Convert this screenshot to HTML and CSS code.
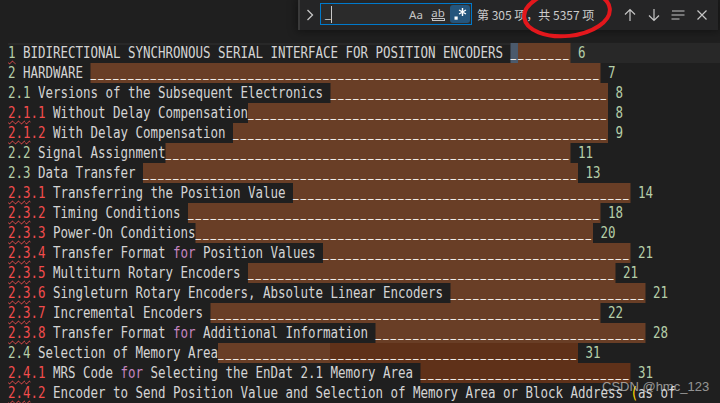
FILE: index.html
```html
<!DOCTYPE html>
<html lang="zh-CN">
<head>
<meta charset="utf-8">
<title>Find</title>
<link rel="stylesheet" href="styles.css">
</head>
<body>
<div class="editor">
  <div class="lines">
    <div class="row cl"><span class="t"><span class="g"><span class="sq">1</span></span> BIDIRECTIONAL SYNCHRONOUS SERIAL INTERFACE FOR POSITION ENCODERS </span><span class="f cb"><span class="u">_</span></span><span class="f"><span class="u">_______</span></span><span class="p"> 6</span></div>
    <div class="row"><span class="t"><span class="g">2</span> HARDWARE </span><span class="f"><span class="u">____________________________________________________________________</span></span><span class="p"> 7</span></div>
    <div class="row"><span class="t"><span class="g">2.1</span> Versions of the Subsequent Electronics </span><span class="f"><span class="u">_____________________________________</span></span><span class="p"> 8</span></div>
    <div class="row"><span class="t"><span class="r"><span class="sq">2.1</span>.1</span> Without Delay Compensation</span><span class="f"><span class="u">________________________________________________</span></span><span class="p"> 8</span></div>
    <div class="row"><span class="t"><span class="r"><span class="sq">2.1</span>.2</span> With Delay Compensation </span><span class="f"><span class="u">__________________________________________________</span></span><span class="p"> 9</span></div>
    <div class="row"><span class="t"><span class="g">2.2</span> Signal Assignment</span><span class="f"><span class="u">______________________________________________________</span></span><span class="p"> 11</span></div>
    <div class="row"><span class="t"><span class="g">2.3</span> Data Transfer </span><span class="f"><span class="u">__________________________________________________________</span></span><span class="p"> 13</span></div>
    <div class="row"><span class="t"><span class="r"><span class="sq">2.3</span>.1</span> Transferring the Position Value </span><span class="f"><span class="u">_____________________________________________</span></span><span class="p"> 14</span></div>
    <div class="row"><span class="t"><span class="r"><span class="sq">2.3</span>.2</span> Timing Conditions </span><span class="f"><span class="u">_______________________________________________________</span></span><span class="p"> 18</span></div>
    <div class="row"><span class="t"><span class="r"><span class="sq">2.3</span>.3</span> Power-On Conditions</span><span class="f"><span class="u">_____________________________________________________</span></span><span class="p"> 20</span></div>
    <div class="row"><span class="t"><span class="r"><span class="sq">2.3</span>.4</span> Transfer Format <span class="k">for</span> Position Values </span><span class="f"><span class="u">_________________________________________</span></span><span class="p"> 21</span></div>
    <div class="row"><span class="t"><span class="r"><span class="sq">2.3</span>.5</span> Multiturn Rotary Encoders </span><span class="f"><span class="u">_________________________________________________</span></span><span class="p"> 21</span></div>
    <div class="row"><span class="t"><span class="r"><span class="sq">2.3</span>.6</span> Singleturn Rotary Encoders, Absolute Linear Encoders </span><span class="f"><span class="u">__________________________</span></span><span class="p"> 21</span></div>
    <div class="row"><span class="t"><span class="r"><span class="sq">2.3</span>.7</span> Incremental Encoders </span><span class="f"><span class="u">____________________________________________________</span></span><span class="p"> 22</span></div>
    <div class="row"><span class="t"><span class="r"><span class="sq">2.3</span>.8</span> Transfer Format <span class="k">for</span> Additional Information </span><span class="f"><span class="u">____________________________________</span></span><span class="p"> 28</span></div>
    <div class="row"><span class="t"><span class="g">2.4</span> Selection of Memory Area</span><span class="f split"><span class="u">________________________________________________</span></span><span class="p"> 31</span></div>
    <div class="row"><span class="t"><span class="r"><span class="sq">2.4</span>.1</span> MRS Code <span class="k">for</span> Selecting the EnDat 2.1 Memory Area </span><span class="f dk"><span class="u">____________________________</span></span><span class="p"> 31</span></div>
    <div class="row"><span class="t"><span class="r"><span class="sq">2.4</span>.2</span> Encoder to Send Position Value and Selection of Memory Area or Block Address <span class="y">(</span>as of</span></div>
  </div>

  <div class="find">
    <div class="toggle">
      <svg width="16" height="16" viewBox="0 0 16 16"><path d="M5.5 3 L10.5 8 L5.5 13" fill="none" stroke="#c5c5c5" stroke-width="1.3"/></svg>
    </div>
    <div class="input">
      <span class="q">_</span><span class="caret"></span>
      <span class="spacer"></span>
      <span class="opt">Aa</span>
      <span class="opt ww"><span class="ab">ab</span><span class="brk"></span></span>
      <span class="opt on">
        <svg width="16" height="16" viewBox="0 0 16 16"><rect x="2.5" y="10.5" width="3.2" height="3.2" fill="#ffffff"/><path d="M10.5 2 V10 M7.04 4 L13.96 8 M7.04 8 L13.96 4" stroke="#ffffff" stroke-width="1.4" fill="none"/></svg>
      </span>
    </div>
    <span class="count">第 305 项，共 5357 项</span>
    <div class="btns">
      <span class="btn"><svg width="16" height="16" viewBox="0 0 16 16"><path d="M8 14 V2.5 M3 7.5 L8 2.5 L13 7.5" fill="none" stroke="#c5c5c5" stroke-width="1.2"/></svg></span>
      <span class="btn"><svg width="16" height="16" viewBox="0 0 16 16"><path d="M8 2 V13.5 M3 8.5 L8 13.5 L13 8.5" fill="none" stroke="#c5c5c5" stroke-width="1.2"/></svg></span>
      <span class="btn"><svg width="16" height="16" viewBox="0 0 16 16"><path d="M2 4 H14.5 M1.5 8 H14.5 M1.5 12 H9.5" fill="none" stroke="#c5c5c5" stroke-width="1.1"/></svg></span>
      <span class="btn"><svg width="16" height="16" viewBox="0 0 16 16"><path d="M3.5 3.5 L12.5 12.5 M12.5 3.5 L3.5 12.5" fill="none" stroke="#c5c5c5" stroke-width="1.2"/></svg></span>
    </div>
  </div>

  <svg class="mark" width="720" height="60" viewBox="0 0 720 60"><ellipse cx="567" cy="13" rx="43" ry="23" transform="rotate(-6 567 13)" fill="none" stroke="#e3171c" stroke-width="4"/></svg>

  <div class="wm">CSDN @hmc_123</div>
</div>
</body>
</html>
```

FILE: styles.css
```css
html, body {
  margin: 0;
  height: 100%;
  background: #1f1f1f;
  overflow: hidden;
}

.editor {
  position: relative;
  width: 720px;
  height: 403px;
  box-sizing: border-box;
  padding: 43px 0 0 8px;
  background: #1f1f1f;
  overflow: hidden;
}

.lines {
  width: 864px;
  transform: scaleX(0.83333);
  transform-origin: 0 0;
  font-family: "DejaVu Sans Mono", monospace;
  font-size: 15px;
  letter-spacing: -0.03px;
  line-height: 20px;
  color: #d4d4d4;
}

.row {
  display: flex;
  height: 20px;
  white-space: pre;
}

.row.cl {
  background: #282828;
}

.row.cl .t {
  background: #1f1f1f;
  box-shadow: inset 0 2px #282828;
}

.f {
  background: #693e26;
}

.f.cb {
  background: #4b5a6c;
}

.f.split {
  background: linear-gradient(to right, #693e26 135px, #5f3119 135px);
}

.f.dk {
  background: #5f3119;
}

.u {
  font-size: 11px;
  font-weight: bold;
  letter-spacing: 2.3774px;
  color: #f0ebe6;
  vertical-align: 1px;
}

.p, .g {
  color: #b5cea8;
}

.r {
  color: #f14c4c;
}

.k {
  color: #c586c0;
}

.y {
  color: #ffd700;
}

.sq {
  text-decoration: underline wavy #f14c4c;
  text-decoration-thickness: 1px;
  text-underline-offset: 2px;
  text-decoration-skip-ink: none;
}

/* find widget */
.find {
  position: absolute;
  top: 0;
  left: 298px;
  width: 420px;
  height: 30px;
  box-sizing: border-box;
  border-left: 2px solid #3a3a3a;
  background: #252526;
  box-shadow: 0 0 8px 2px rgba(0, 0, 0, 0.36);
  display: flex;
  align-items: flex-start;
  font-family: "Noto Sans", "Noto Sans CJK SC", sans-serif;
  color: #cccccc;
}

.toggle {
  width: 20px;
  height: 30px;
  display: flex;
  align-items: center;
  justify-content: center;
}

.input {
  box-sizing: border-box;
  width: 152px;
  height: 22px;
  margin-top: 3px;
  border: 1px solid #007acc;
  background: #2b2b2b;
  display: flex;
  align-items: center;
  padding: 0 1px 0 4px;
}

.q {
  font-size: 13px;
  line-height: 16px;
  color: #cccccc;
  align-self: flex-start;
  margin-top: 1px;
}

.caret {
  width: 1px;
  height: 17px;
  background: #c8c8c8;
}

.spacer {
  flex: 1;
}

.opt {
  width: 20px;
  height: 18px;
  margin-left: 2px;
  border-radius: 3px;
  display: flex;
  align-items: center;
  justify-content: center;
  font-size: 11.5px;
  color: #c5c5c5;
}

.opt.ww {
  flex-direction: column;
  justify-content: center;
}

.ab {
  line-height: 11px;
  text-decoration: underline;
  text-underline-offset: 1px;
}

.brk {
  width: 13px;
  height: 2px;
  border: 1px solid #c5c5c5;
  border-top: none;
  box-sizing: border-box;
  margin-top: 1px;
}

.opt.on {
  background: #25557c;
}

.count {
  margin-left: 5px;
  font-family: "Noto Sans CJK SC", sans-serif;
  font-size: 12px;
  line-height: 30px;
  white-space: nowrap;
}

.btns {
  margin-left: auto;
  padding-right: 4px;
  display: flex;
}

.btn {
  width: 24px;
  height: 30px;
  display: flex;
  align-items: center;
  justify-content: center;
}

.mark {
  position: absolute;
  left: 0;
  top: 0;
}

.wm {
  position: absolute;
  left: 602px;
  top: 379px;
  font-family: "Liberation Sans", Arial, sans-serif;
  font-size: 13px;
  color: rgba(225, 225, 225, 0.62);
}
```
